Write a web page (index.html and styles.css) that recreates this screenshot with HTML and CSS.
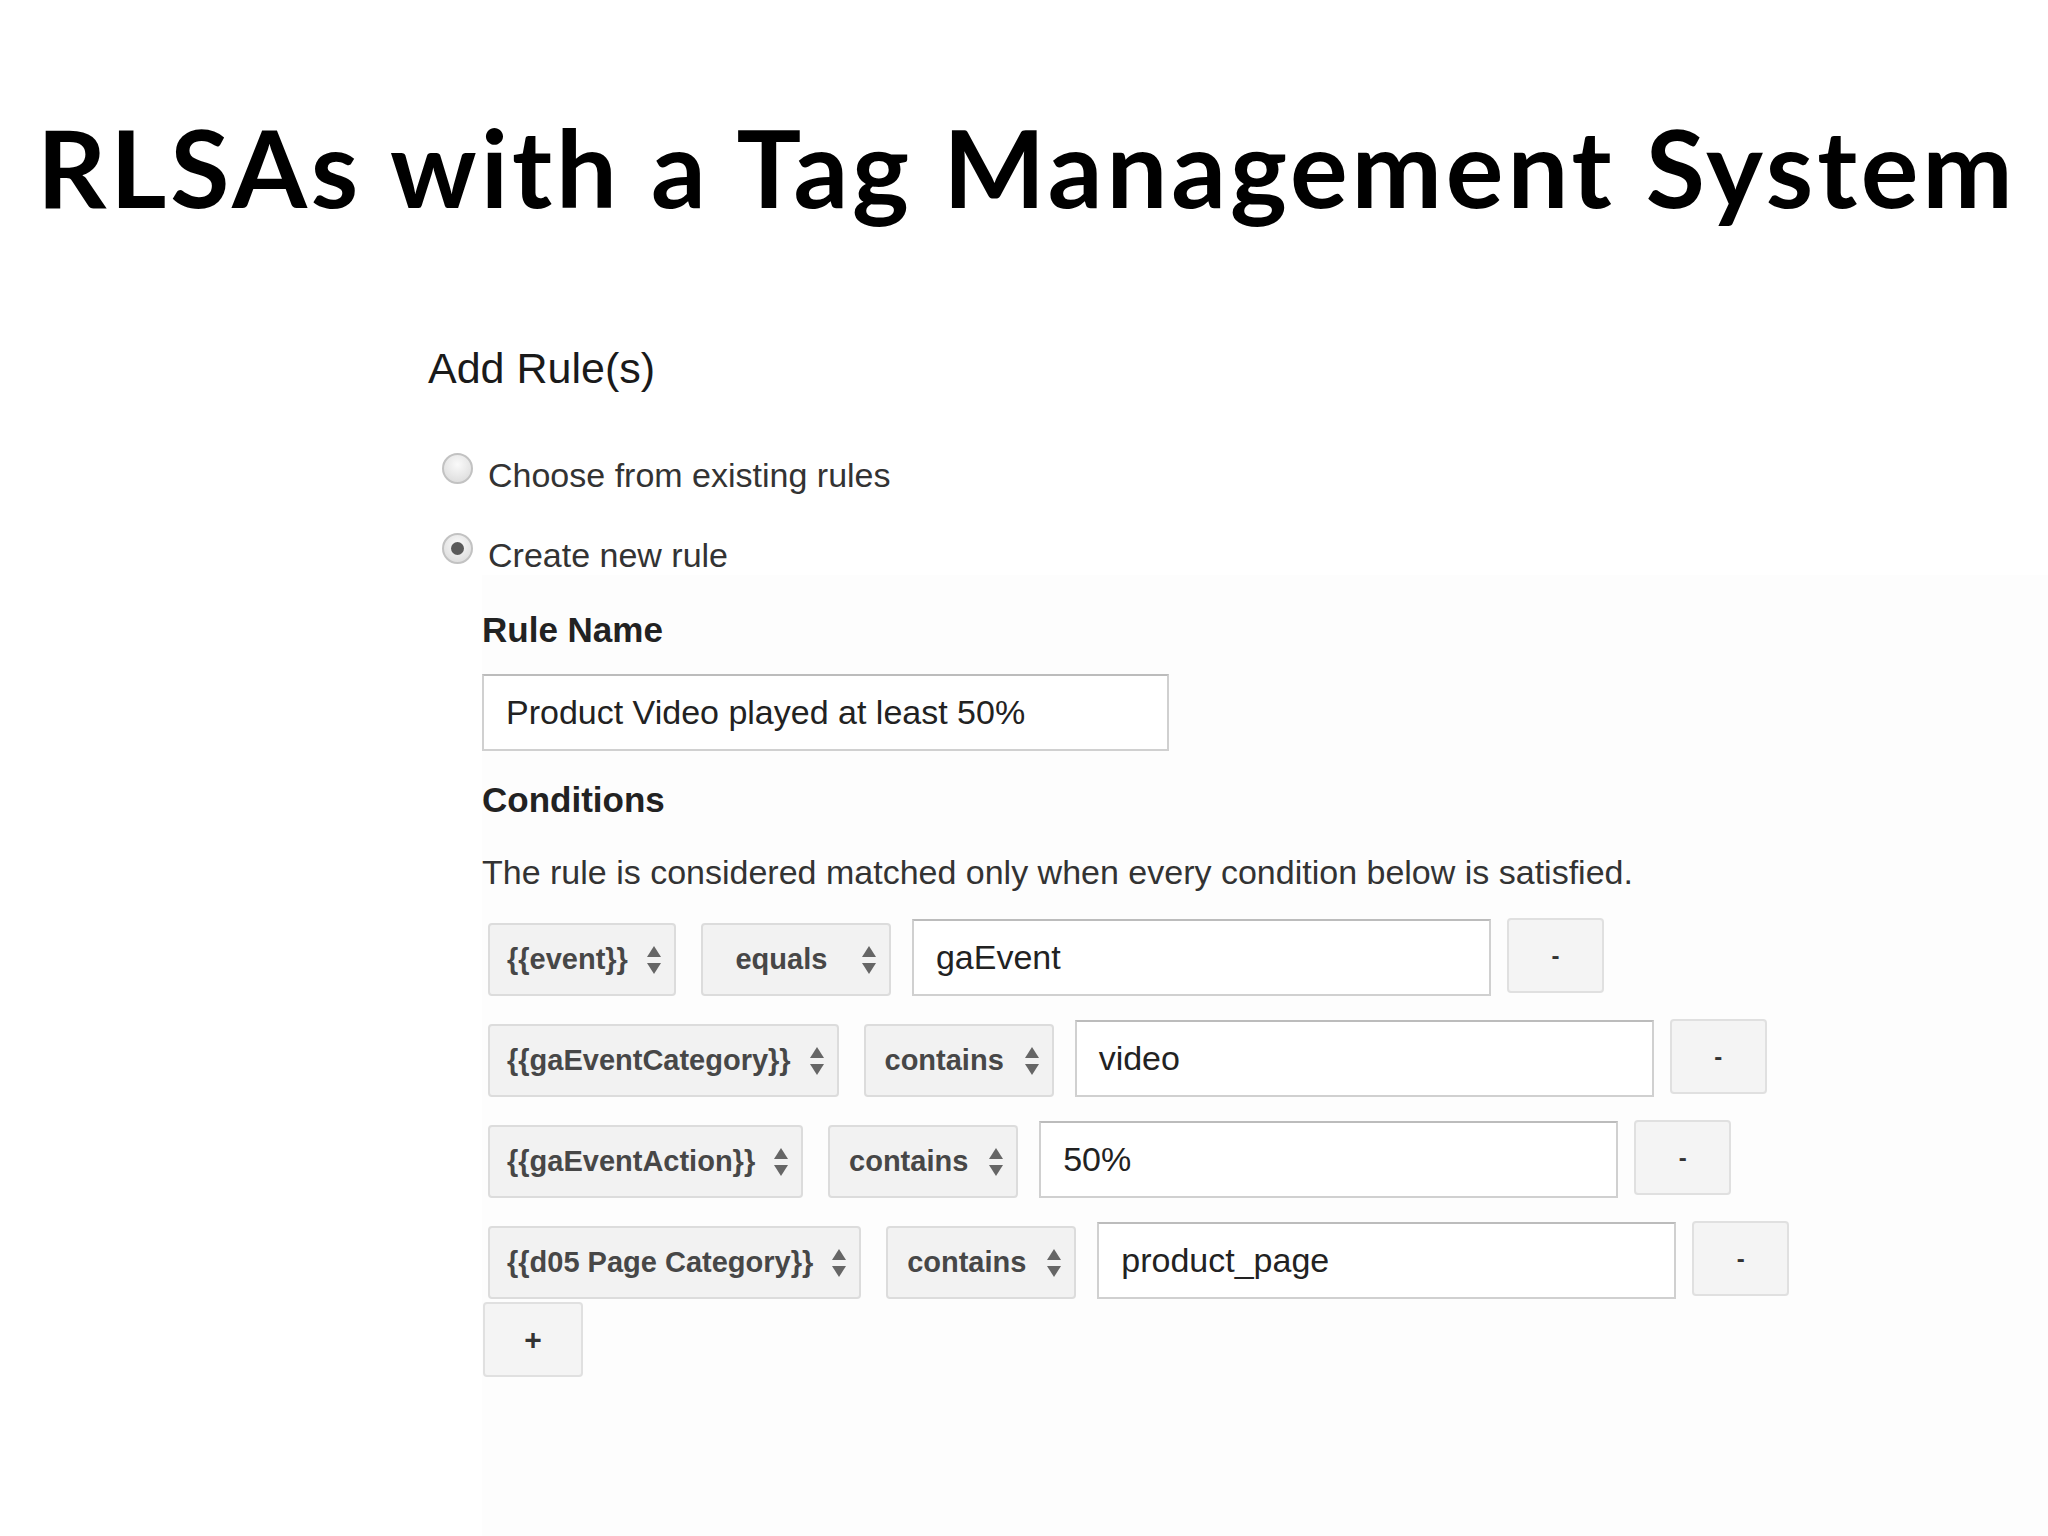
FILE: index.html
```html
<!DOCTYPE html>
<html lang="en">
<head>
  <meta charset="UTF-8">
  <title>RLSAs with a Tag Management System</title>
  <link rel="stylesheet" href="styles.css">
</head>
<body>
<div class="slide">
  <!-- Slide title -->
  <h1 class="slide-title">RLSAs with a Tag Management System</h1>

  <!-- Screenshot of the rule form -->
  <div class="rule-form">
    <h2 class="form-title">Add Rule(s)</h2>

    <label class="radio-row">
      <span class="radio"></span>
      <span>Choose from existing rules</span>
    </label>
    <label class="radio-row">
      <span class="radio checked"></span>
      <span>Create new rule</span>
    </label>

    <div class="rule-body">
      <div class="field-label">Rule Name</div>
      <div class="text-input name-input">Product Video played at least 50%</div>

      <div class="field-label conditions-label">Conditions</div>
      <p class="hint">The rule is considered matched only when every condition below is satisfied.</p>

      <div class="conditions">
        <div class="condition">
          <div class="select"><span>{{event}}</span><svg class="arrows" viewBox="0 0 16 30"><polygon points="8,1 15,12 1,12"/><polygon points="1,18 15,18 8,29"/></svg></div>
          <div class="select op"><span>equals</span><svg class="arrows" viewBox="0 0 16 30"><polygon points="8,1 15,12 1,12"/><polygon points="1,18 15,18 8,29"/></svg></div>
          <div class="text-input value">gaEvent</div>
          <div class="btn">-</div>
        </div>
        <div class="condition">
          <div class="select"><span>{{gaEventCategory}}</span><svg class="arrows" viewBox="0 0 16 30"><polygon points="8,1 15,12 1,12"/><polygon points="1,18 15,18 8,29"/></svg></div>
          <div class="select op"><span>contains</span><svg class="arrows" viewBox="0 0 16 30"><polygon points="8,1 15,12 1,12"/><polygon points="1,18 15,18 8,29"/></svg></div>
          <div class="text-input value">video</div>
          <div class="btn">-</div>
        </div>
        <div class="condition">
          <div class="select"><span>{{gaEventAction}}</span><svg class="arrows" viewBox="0 0 16 30"><polygon points="8,1 15,12 1,12"/><polygon points="1,18 15,18 8,29"/></svg></div>
          <div class="select op"><span>contains</span><svg class="arrows" viewBox="0 0 16 30"><polygon points="8,1 15,12 1,12"/><polygon points="1,18 15,18 8,29"/></svg></div>
          <div class="text-input value">50%</div>
          <div class="btn">-</div>
        </div>
        <div class="condition">
          <div class="select"><span>{{d05 Page Category}}</span><svg class="arrows" viewBox="0 0 16 30"><polygon points="8,1 15,12 1,12"/><polygon points="1,18 15,18 8,29"/></svg></div>
          <div class="select op"><span>contains</span><svg class="arrows" viewBox="0 0 16 30"><polygon points="8,1 15,12 1,12"/><polygon points="1,18 15,18 8,29"/></svg></div>
          <div class="text-input value">product_page</div>
          <div class="btn">-</div>
        </div>
      </div>

      <div class="btn add-btn">+</div>
    </div>
  </div>
</div>
</body>
</html>
```

FILE: styles.css
```css
/* Page / slide */
body {
  margin: 0;
  background: #fff;
  font-family: "Liberation Sans", Arial, sans-serif;
  color: #222;
}

.slide {
  width: 2048px;
  height: 1536px;
  display: flex;
  flex-direction: column;
  overflow: hidden;
}

/* Big slide title */
.slide-title {
  margin: 112px 0 0 37px;
  font-family: Lato, "Open Sans", sans-serif;
  font-weight: 700;
  font-size: 108px;
  line-height: 1;
  letter-spacing: 3.9px;
  color: #000;
  white-space: nowrap;
}

/* Form screenshot */
.rule-form {
  flex: 1;
  display: flex;
  flex-direction: column;
  margin: 123px 0 0 428px;
}

.form-title {
  margin: 0 0 62px 0;
  font-size: 43px;
  font-weight: normal;
  line-height: 50px;
  color: #1a1a1a;
}

.radio-row {
  display: flex;
  align-items: flex-start;
  gap: 15px;
  margin-left: 14px;
  font-size: 34px;
  line-height: 40px;
  color: #333;
}

.radio-row + .radio-row {
  margin-top: 40px;
}

.radio {
  width: 31px;
  height: 31px;
  margin-top: -2px;
  box-sizing: border-box;
  border-radius: 50%;
  border: 2px solid #c2c2c2;
  background: radial-gradient(circle at 50% 35%, #fafafa 0, #e0e0e0 75%);
  display: flex;
  align-items: center;
  justify-content: center;
}

.radio.checked::after {
  content: "";
  width: 13px;
  height: 13px;
  border-radius: 50%;
  background: #5a5a5a;
}

/* Everything under "Create new rule" */
.rule-body {
  flex: 1;
  margin-left: 54px;
  padding-top: 35px;
  background: #fdfdfd;
}

.field-label {
  font-size: 35px;
  font-weight: bold;
  line-height: 40px;
  color: #222;
}

.text-input {
  box-sizing: border-box;
  height: 77px;
  padding: 0 22px;
  display: flex;
  align-items: center;
  border: 2px solid #d0d0d0;
  border-top-color: #bcbcbc;
  background: #fff;
  font-size: 34px;
  color: #222;
  white-space: nowrap;
}

.name-input {
  width: 687px;
  margin-top: 24px;
}

.conditions-label {
  margin-top: 29px;
}

.hint {
  margin: 32px 0 0 0;
  font-size: 34px;
  line-height: 40px;
  color: #333;
}

/* Condition rows */
.conditions {
  margin: 26px 0 0 6px;
  display: flex;
  flex-direction: column;
  gap: 23px;
}

.condition {
  display: flex;
  align-items: flex-start;
}

.select {
  box-sizing: border-box;
  height: 73px;
  margin: 5px 25px 0 0;
  padding: 0 12px 0 17px;
  display: flex;
  align-items: center;
  gap: 18px;
  border: 2px solid #dcdcdc;
  border-radius: 4px;
  background: #f2f2f2;
  font-size: 29px;
  font-weight: bold;
  color: #474747;
  white-space: nowrap;
}

.select.op {
  width: 190px;
  margin-right: 21px;
}

.select.op span {
  flex: 1;
  text-align: center;
}

.arrows {
  width: 16px;
  height: 30px;
  fill: #666;
  flex: none;
}

.value {
  width: 579px;
  margin: 1px 16px 0 0;
}

.btn {
  box-sizing: border-box;
  width: 97px;
  height: 75px;
  display: flex;
  align-items: center;
  justify-content: center;
  border: 2px solid #e0e0e0;
  border-radius: 4px;
  background: #f4f4f4;
  font-size: 24px;
  font-weight: bold;
  color: #333;
}

.add-btn {
  width: 100px;
  margin: 3px 0 0 1px;
  font-size: 30px;
}
```
